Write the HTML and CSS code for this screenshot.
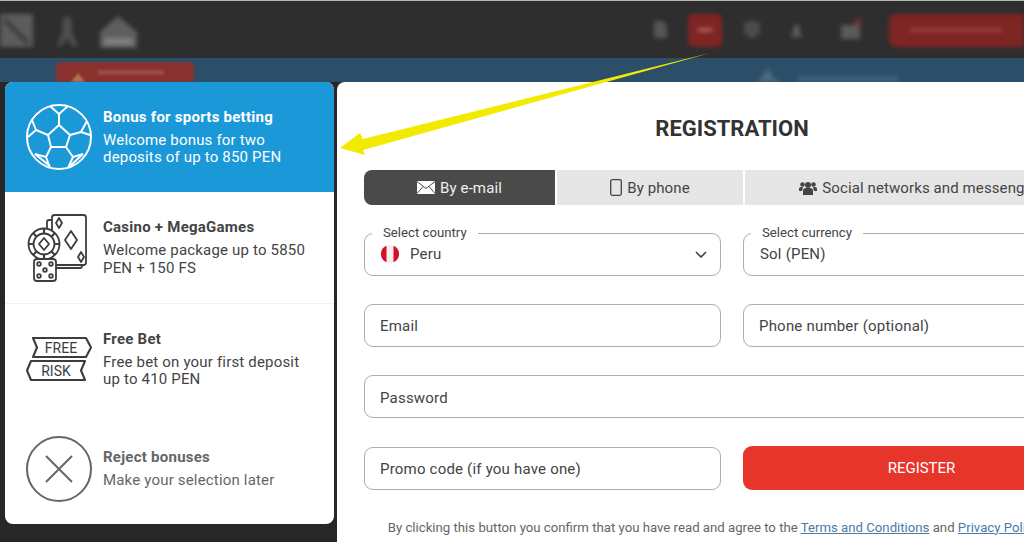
FILE: index.html
```html
<!DOCTYPE html>
<html lang="en">
<head>
  <meta charset="UTF-8">
  <meta name="viewport" content="width=device-width, initial-scale=1.0">
  <title>Registration</title>
  <link rel="stylesheet" href="styles.css">
</head>
<body>

  <!-- blurred site header behind the dialog -->
  <header class="topbar">
    <svg class="topbar-left" width="140" height="58" viewBox="0 0 140 58">
      <path d="M0 13h33v33H0z" fill="#5c5c5c"/>
      <path d="M4 18l24 24" stroke="#3a3a3a" stroke-width="4"/>
      <path d="M63 16h8l1 15 6 14h-6l-5-8-5 8h-5l5-14z" fill="#4e4e4e"/>
      <path d="M100 31l18-16 19 16v16h-37z" fill="#5e5e5e"/>
      <path d="M104 37h29v7h-29z" fill="#808080"/>
    </svg>
    <svg class="topbar-right" width="370" height="58" viewBox="654 0 370 58">
      <path d="M654 20h9l4 5v12h-13z" fill="#565656"/>
      <rect x="688" y="13" width="34" height="33" rx="5" fill="#7f2523"/>
      <path d="M698 27h14v4h-14z" fill="#a8605c"/>
      <path d="M744 22l8-3 8 3v10l-8 6-8-6z" fill="#4c4c4c"/>
      <path d="M790 36l3-4v-6a4 4 0 0 1 7 0v6l3 4z" fill="#5a5a5a"/>
      <path d="M841 24h19v14h-19z" fill="#5a5a5a"/>
      <circle cx="858" cy="21" r="3" fill="#8c2f2c"/>
      <rect x="889" y="13" width="180" height="33" rx="7" fill="#7f2523"/>
      <path d="M910 27h92v4h-92z" fill="#953f3b"/>
    </svg>
  </header>
  <div class="ribbon">
    <svg class="ribbon-btn" width="138" height="24" viewBox="0 0 138 24">
      <rect y="4" width="138" height="40" rx="6" fill="#8a312e"/>
      <path d="M15 24l7-9 7 9z" fill="#a8764f"/>
      <path d="M42 12h66v5H42z" fill="#9a4b47"/>
    </svg>
    <svg class="ribbon-note" width="140" height="24" viewBox="0 0 140 24">
      <path d="M0 24l6-8 4-6 5 10 9 4z" fill="#4f6a80"/>
      <path d="M40 18h106v6H40z" fill="#3c607b"/>
    </svg>
  </div>

  <main class="stage">

    <!-- Бонусы -->
    <aside class="bonus-list">
      <div class="bonus bonus-active">
        <svg class="bonus-icon" width="66" height="66" viewBox="-33 -33 66 66" fill="none" stroke="#fff" stroke-width="2" stroke-linejoin="round">
          <circle r="32"/>
          <path d="M0-12l11 10-4 12H-8l-3-12z"/>
          <path d="M0-12v-11M-9-31l9 8 9-8"/>
          <path d="M11-2l11-3M28-16l-6 11 9 3"/>
          <path d="M-11-2l-12-5M-27-17l4 10-8 7"/>
          <path d="M-8 10l-5 10M7 10l7 10"/>
          <path d="M-9 31l-4-11M9 31l5-11"/>
          <path d="M-13 20l-11-3M14 20l10-3"/>
          <path d="M-24 17l15 12M24 17l-13 12"/>
        </svg>
        <div class="bonus-text">
          <h2>Bonus for sports betting</h2>
          <p>Welcome bonus for two<br>deposits of up to 850 PEN</p>
        </div>
      </div>

      <div class="bonus bonus-tall">
        <svg class="bonus-icon" width="66" height="70" viewBox="0 0 66 70" fill="none" stroke="#3d3d3d" stroke-width="1.800" stroke-linejoin="round">
          <rect x="26" y="2" width="34" height="50" rx="2.500"/>
          <path d="M26 7h-3a2 2 0 0 0-2 2v7M30 52v3h24a2 2 0 0 0 2-2v-1"/>
          <path d="M33 5l3 5-3 5-3-5zM45 18l6 9-6 9-6-9zM55 39l3 5-3 5-3-5z"/>
          <circle cx="18" cy="31" r="15.500" fill="#fff"/>
          <circle cx="18" cy="31" r="10.500"/>
          <path d="M18 25l5 6-5 6-5-6z"/>
          <path d="M18 15.500v5M18 41.500v5M2.500 31h5M28.500 31h5M7 20l3.500 3.500M29 20l-3.500 3.500M7 42l3.500-3.500M29 42l-3.500-3.500" stroke-width="2.200"/>
          <rect x="8" y="46" width="22" height="22" rx="3" fill="#fff"/>
          <circle cx="13" cy="51" r="1.800"/><circle cx="25" cy="51" r="1.800"/>
          <circle cx="19" cy="57" r="1.800"/>
          <circle cx="13" cy="63" r="1.800"/><circle cx="25" cy="63" r="1.800"/>
        </svg>
        <div class="bonus-text">
          <h2>Casino + MegaGames</h2>
          <p>Welcome package up to 5850<br>PEN + 150 FS</p>
        </div>
      </div>

      <div class="bonus bonus-tall bonus-divided">
        <svg class="bonus-icon" width="66" height="46" viewBox="0 0 66 46" fill="none" stroke="#3d3d3d" stroke-width="2.100" stroke-linejoin="round">
          <path d="M7 2h53l5 9.500L60 21H7l4-9.500z"/>
          <path d="M5 25h54l-4 9.500L59 44H5L1 34.500z"/>
          <text class="ticket-word" x="35" y="16.500" text-anchor="middle">FREE</text>
          <text class="ticket-word" x="30" y="39.500" text-anchor="middle">RISK</text>
        </svg>
        <div class="bonus-text">
          <h2>Free Bet</h2>
          <p>Free bet on your first deposit<br>up to 410 PEN</p>
        </div>
      </div>

      <div class="bonus bonus-reject">
        <svg class="bonus-icon" width="66" height="66" viewBox="0 0 66 66" fill="none" stroke="#666" stroke-width="2">
          <circle cx="33" cy="33" r="32"/>
          <path d="M20 20l26 26M46 20L20 46"/>
        </svg>
        <div class="bonus-text">
          <h2>Reject bonuses</h2>
          <p>Make your selection later</p>
        </div>
      </div>
    </aside>

    <!-- Форма регистрации -->
    <section class="register">
      <h1>REGISTRATION</h1>

      <div class="tabs">
        <div class="tab tab-active">
          <svg width="18" height="13" viewBox="0 0 18 13"><path d="M0 0h18v13H0z" fill="#fff"/><path d="M0 .5l9 7 9-7M0 12.500l6-7M18 12.500l-6-7" fill="none" stroke="#4a4a4a"/></svg>
          By e-mail
        </div>
        <div class="tab tab-phone">
          <svg width="12" height="17" viewBox="0 0 12 17"><rect x=".7" y=".7" width="10.600" height="15.600" rx="1.500" fill="none" stroke="#444" stroke-width="1.300"/></svg>
          By phone
        </div>
        <div class="tab tab-social">
          <svg width="18" height="14" viewBox="0 0 18 14" fill="#444"><circle cx="9" cy="4" r="3"/><circle cx="3.500" cy="3.500" r="2.300"/><circle cx="14.500" cy="3.500" r="2.300"/><path d="M4 14V10a3 3 0 0 1 3-3h4a3 3 0 0 1 3 3v4zM0 10V8a2 2 0 0 1 2-2h2L3 10zM18 10V8a2 2 0 0 0-2-2h-2l1 4z"/></svg>
          Social networks and messengers
        </div>
      </div>

      <div class="form-grid">
        <div class="field field-legend">
          <span class="legend">Select country</span>
          <svg class="flag" width="18" height="18" viewBox="0 0 18 18"><circle cx="9" cy="9" r="9" fill="#f4eeee"/><path d="M5.500 .7A9 9 0 0 0 5.500 17.300zM12.500 .7A9 9 0 0 1 12.500 17.300z" fill="#d2102c"/></svg>
          <span class="value">Peru</span>
          <svg class="chevron" width="12" height="7" viewBox="0 0 12 7"><path d="M1 1l5 5 5-5" fill="none" stroke="#444" stroke-width="1.600"/></svg>
        </div>
        <div class="field field-legend">
          <span class="legend">Select currency</span>
          <span class="value">Sol (PEN)</span>
        </div>

        <div class="field field-plain"><span class="value">Email</span></div>
        <div class="field field-plain"><span class="value">Phone number (optional)</span></div>

        <div class="field field-plain field-wide"><span class="value">Password</span></div>

        <div class="field field-plain"><span class="value">Promo code (if you have one)</span></div>
        <button class="register-btn">REGISTER</button>
      </div>

      <p class="terms">By clicking this button you confirm that you have read and agree to the <a href="#">Terms and Conditions</a> and <a href="#">Privacy Policy</a> of the</p>
    </section>
  </main>

  <!-- жёлтая стрелка поверх скриншота -->
  <svg class="arrow" width="1024" height="542" viewBox="0 0 1024 542">
    <path d="M710 53L363 139l-3-6-20 15 25 7-2-5 347-97z" fill="#f2ea00"/>
  </svg>

</body>
</html>
```

FILE: styles.css
```css
* {
  box-sizing: border-box;
}

html, body {
  margin: 0;
  height: 542px;
  overflow: hidden;
}

body {
  font-family: Roboto, "Liberation Sans", sans-serif;
  background-color: #272727;
  border-top: 1px solid #b5b5b5;
  color: #444;
}

.topbar {
  height: 57px;
  display: flex;
  justify-content: space-between;
  background-color: #2e2e2e;
  overflow: hidden;
}

.topbar svg {
  filter: blur(2px);
}

.ribbon {
  height: 24px;
  display: flex;
  padding-left: 56px;
  background-color: #2c4f69;
  overflow: hidden;
}

.ribbon-btn {
  filter: blur(1.2px);
}

.ribbon-note {
  margin-left: 564px;
  filter: blur(2px);
}

.stage {
  display: flex;
  gap: 3px;
  padding-left: 5px;
}

/* левая колонка */
.bonus-list {
  flex: none;
  width: 329px;
  height: 442px;
  border-radius: 8px;
  background-color: #fff;
  overflow: hidden;
}

.bonus {
  height: 110px;
  display: flex;
  align-items: center;
  padding-left: 21px;
}

.bonus-tall {
  height: 111px;
}

.bonus-icon {
  flex: none;
  margin-right: 11px;
}

.bonus-divided {
  border-top: 1px solid #f1f1f1;
}

.bonus h2 {
  margin: 0 0 6px;
  font-size: 15px;
  font-weight: 700;
  line-height: 18px;
  letter-spacing: 0.25px;
}

.bonus p {
  margin: 0;
  font-size: 15px;
  line-height: 17.5px;
  letter-spacing: 0.18px;
}

.bonus-active {
  background-color: #1a98d8;
  color: #fff;
}

.bonus-reject {
  color: #666;
}

.ticket-word {
  font-family: Roboto, sans-serif;
  font-size: 14px;
  fill: #3d3d3d;
  stroke: none;
}

/* правая колонка */
.register {
  flex: none;
  width: 790px;
  height: 460px;
  padding: 0 27px;
  border-radius: 8px 0 0 0;
  background-color: #fff;
}

.register h1 {
  margin: 33px 0 0;
  height: 55px;
  text-align: center;
  font-size: 22px;
  font-weight: 700;
  line-height: 28px;
  color: #333;
}

.tabs {
  display: flex;
  gap: 2px;
  height: 35px;
  font-size: 15px;
  letter-spacing: 0.1px;
}

.tab {
  display: flex;
  align-items: center;
  justify-content: center;
  gap: 5px;
  background-color: #e6e6e6;
  white-space: nowrap;
}

.tab-active {
  width: 191px;
  border-radius: 8px 0 0 8px;
  background-color: #4a4a4a;
  color: #eee;
}

.tab-phone {
  width: 186px;
}

.tab-social {
  flex: 1;
  border-radius: 0 8px 8px 0;
}

.form-grid {
  display: grid;
  grid-template-columns: 357px 357px;
  column-gap: 22px;
  row-gap: 28.4px;
  margin-top: 27.6px;
}

.field {
  position: relative;
  height: 43px;
  display: flex;
  align-items: center;
  padding: 0 15px;
  border: 1px solid #adadad;
  border-radius: 9px;
  font-size: 15px;
}

.field-plain {
  padding-top: 2px;
}

.field-wide {
  grid-column: 1 / 3;
}

.field-legend {
  padding-left: 16px;
}

.value {
  letter-spacing: 0.2px;
}

.legend {
  position: absolute;
  top: -9px;
  left: 7px;
  padding: 0 11px;
  background-color: #fff;
  font-size: 13.2px;
  line-height: 16px;
}

.flag {
  flex: none;
  margin-right: 11px;
}

.chevron {
  margin-left: auto;
  margin-right: -2px;
}

.register-btn {
  height: 44px;
  margin-top: -1px;
  border: none;
  border-radius: 9px;
  background-color: #e6352b;
  color: #fff;
  font-family: inherit;
  font-size: 15px;
}

.terms {
  margin: 30px 0 0;
  text-align: center;
  font-size: 13.2px;
  line-height: 16px;
  color: #666;
  white-space: nowrap;
}

.terms a {
  color: #4a7ba6;
}

.arrow {
  position: absolute;
  top: 0;
  left: 0;
  pointer-events: none;
}
```
